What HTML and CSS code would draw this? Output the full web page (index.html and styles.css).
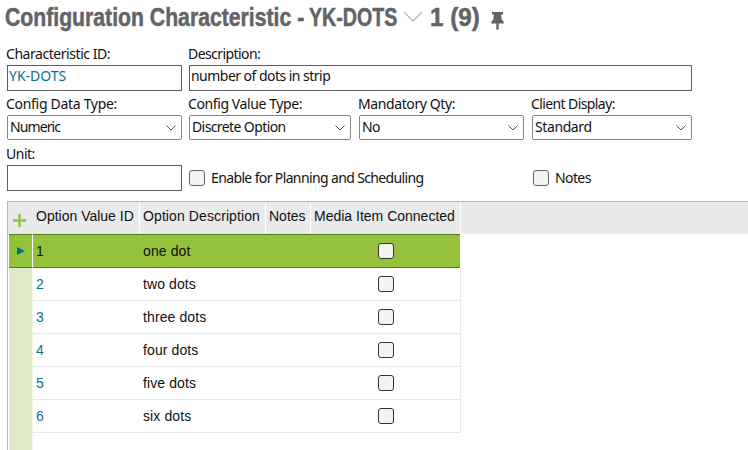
FILE: index.html
```html
<!DOCTYPE html>
<html lang="en">
<head>
<meta charset="utf-8">
<title>Configuration Characteristic - YK-DOTS</title>
<link rel="stylesheet" href="styles.css">
</head>
<body>
<svg class="defs" width="0" height="0"><defs><symbol id="chev" viewBox="0 0 10 6"><path d="M.5.5 5 5 9.5.5" fill="none" stroke="#555" stroke-width="1"/></symbol></defs></svg>
<header class="title">
  <h1><span class="kind">Configuration Characteristic -</span> <span class="name">YK-DOTS</span></h1>
  <svg class="drop" width="20" height="12" viewBox="0 0 20 12"><path d="M1 1 10 10 19 1" fill="none" stroke="#b5b5b5" stroke-width="1.3"/></svg>
  <span class="count"><span>1 (9)</span></span>
  <svg class="pin" width="13" height="18" viewBox="0 0 13 18"><path d="M1 0H12V2.5H10.2L10.6 7.5Q12.7 8.5 13 11.5H7.7V17.5H5.3V11.5H0Q.3 8.5 2.4 7.5L2.8 2.5H1Z" fill="#636466"/></svg>
</header>
<main>
<form class="form">
  <div class="field id"><label class="t1">Characteristic ID:</label><div class="input link"><span>YK-DOTS</span></div></div>
  <div class="field desc"><label class="t2">Description:</label><div class="input"><span class="v1">number of dots in strip</span></div></div>
  <div class="field c1"><label class="t3">Config Data Type:</label><div class="select"><span class="v2">Numeric</span><svg width="10" height="6"><use href="#chev"/></svg></div></div>
  <div class="field c2"><label class="t4">Config Value Type:</label><div class="select"><span class="v3">Discrete Option</span><svg width="10" height="6"><use href="#chev"/></svg></div></div>
  <div class="field c3"><label class="t5">Mandatory Qty:</label><div class="select"><span class="v4">No</span><svg width="10" height="6"><use href="#chev"/></svg></div></div>
  <div class="field c4"><label class="t6">Client Display:</label><div class="select"><span class="v5">Standard</span><svg width="10" height="6"><use href="#chev"/></svg></div></div>
  <div class="field c1"><label class="t7">Unit:</label><div class="input"></div></div>
  <div class="check plan"><i class="box"></i><span class="v6">Enable for Planning and Scheduling</span></div>
  <div class="check c4"><i class="box"></i><span class="v7">Notes</span></div>
</form>
<section class="table">
  <div class="row head"><div class="add"><svg width="13" height="13" viewBox="0 0 13 13"><path d="M6.5 0V13M0 6.5H13" stroke="#95c23d" stroke-width="2.4"/></svg></div><div><span>Option Value ID</span></div><div><span>Option Description</span></div><div><span>Notes</span></div><div><span>Media Item Connected</span></div><div class="rest"></div></div>
  <div class="row current"><div class="gutter"><svg width="8" height="8" viewBox="0 0 8 8"><path d="M0 0 8 4 0 8Z" fill="#00708f"/></svg></div><div>1</div><div>one dot</div><div></div><div class="mark"><i class="box"></i></div></div>
  <div class="row"><div class="gutter"></div><div class="num">2</div><div>two dots</div><div></div><div class="mark"><i class="box"></i></div></div>
  <div class="row"><div class="gutter"></div><div class="num">3</div><div>three dots</div><div></div><div class="mark"><i class="box"></i></div></div>
  <div class="row"><div class="gutter"></div><div class="num">4</div><div>four dots</div><div></div><div class="mark"><i class="box"></i></div></div>
  <div class="row"><div class="gutter"></div><div class="num">5</div><div>five dots</div><div></div><div class="mark"><i class="box"></i></div></div>
  <div class="row"><div class="gutter"></div><div class="num">6</div><div>six dots</div><div></div><div class="mark"><i class="box"></i></div></div>
  <div class="tail"></div>
</section>
</main>
</body>
</html>
```
FILE: styles.css
```css
* { box-sizing: border-box; }
body { margin: 0; height: 450px; overflow: hidden; background: #fff; color: #111; font: 14px/20px "Noto Sans", "Open Sans", sans-serif; }
svg { display: block; flex: none; }
.defs { position: absolute; }
.title { display: flex; height: 45px; padding: 2px 0 0 5px; color: #636466; font: bold 25px/30px "Liberation Sans", sans-serif; white-space: nowrap; }
h1 { display: flex; margin: 0; width: 393px; font: inherit; }
h1 span, .count span { display: inline-block; transform-origin: 0 0; -webkit-text-stroke: .5px #636466; }
.kind { width: 304px; transform: scaleX(.848); }
.name { transform: scaleX(.785); }
.kind, .name { flex: none; }
.name { width: 88px; }
.count span { transform: scaleX(.97); }
.drop { margin: 9px 0 0 5px; }
.count { width: 50px; margin-left: 7px; }
.pin { margin: 10px 0 0 11px; }
.form { display: grid; grid-template-columns: 175px 161px 165px 160px; grid-template-rows: 50px 50px 50px; column-gap: 8px; margin: 0 0 0 7px; height: 156px; }
.form .field.c2, .form .desc, .plan { margin-left: -1px; }
.desc { grid-column: 2 / 5; }
.plan { grid-column: 2 / 4; }
.field label { display: block; height: 20px; margin-left: -1px; line-height: 18px; white-space: nowrap; }
.input { height: 26px; border: 1px solid #5d5d5f; padding: 0 1px; line-height: 20px; }
.link, .num { color: #08708f; }
.select { height: 25px; display: flex; justify-content: space-between; align-items: center; border: 1px solid #858585; border-radius: 2px; padding: 0 5px 0 2px; white-space: nowrap; line-height: 18px; }
.select span { padding-bottom: 2px; }
.check { display: flex; gap: 6px; padding-top: 25px; height: 50px; white-space: nowrap; line-height: 16px; }
.t1 { letter-spacing: -.45px; }
.t2 { letter-spacing: -.58px; }
.t3 { letter-spacing: -.3px; }
.t4 { letter-spacing: -.4px; }
.t5 { letter-spacing: -.4px; }
.t6 { letter-spacing: -.6px; }
.t7 { letter-spacing: -.5px; }
.v1 { letter-spacing: -.53px; }
.v2 { letter-spacing: -.9px; }
.v3, .v4, .v7 { letter-spacing: -.6px; }
.v5 { letter-spacing: -.4px; }
.v6 { letter-spacing: -.63px; }
.box { display: block; flex: none; width: 16px; height: 16px; border: 1px solid #646464; border-radius: 3px; background: #f3f3f3; }
.form .c4.check { padding-left: 1px; }
.table { height: 249px; margin-left: 7px; border-top: 1px solid #b5b8b8; border-left: 1px solid #b5b8b8; padding-left: 1px; font: 14px/32px "Liberation Sans", sans-serif; }
.row { display: grid; grid-template-columns: 24px 107px 126px 45px 150px 1fr; height: 33px; white-space: nowrap; }
.row > div { border-bottom: 1px solid #e8e8e8; padding-left: 3px; }
.row > div:nth-child(3) { letter-spacing: .1px; }
.row > div:nth-child(5) { border-right: 1px solid #e8e8e8; }
.head { height: 32px; background: #e9eaeb; line-height: 29px; margin-left: -1px; padding-left: 1px; }
.row.head > div { border: 0; }
.row.head > div:nth-child(n+2):nth-child(-n+5) { border-right: 1px solid #fff; }
.head .add { padding: 12px 0 0 4px; }
.row > .gutter { background: #e1ecc7; border: 0; border-right: 1px solid #f4f8e9; }
.current { height: 34px; }
.row.current > div { background: #95c23d; border-top: 1px solid #567d12; border-bottom: 1px solid #567d12; }
.row.current > .gutter { padding: 12px 0 0 8px; border-right-color: #fff; }
.row.current > .mark { border-right: 0; margin-right: 1px; }
.row > .mark { padding: 8px 0 0 67px; }
.mark .box { border-color: #333; }
.tail { width: 24px; height: 17px; background: #e1ecc7; border-right: 1px solid #f4f8e9; }
```
